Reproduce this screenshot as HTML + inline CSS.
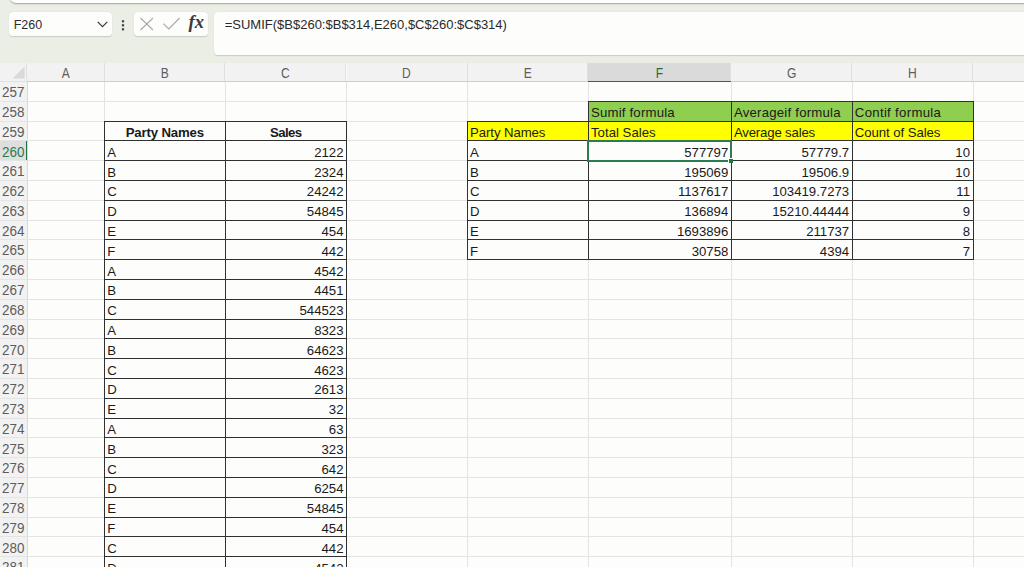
<!DOCTYPE html>
<html lang="en"><head><meta charset="utf-8"><title>Excel - SUMIF</title>
<style>
*{box-sizing:border-box;margin:0;padding:0}
html,body{width:1024px;height:567px;overflow:hidden}
body{background:#ebeee4;font-family:"Liberation Sans",sans-serif;font-size:13.2px;color:#1a1a1a;position:relative}
.abs{position:absolute}
.ribbon{left:10px;top:-10px;width:1030px;height:13.2px;background:#fdfdfc;border-radius:0 0 0 6px;box-shadow:0 1px 1.5px rgba(90,100,90,.5)}
.box{background:#fdfdfc;border-radius:4px;box-shadow:0 0.5px 1px rgba(120,125,115,.3)}
.namebox{left:8.5px;top:12px;width:103.5px;height:24px}
.namebox span{position:absolute;left:5.2px;top:6px;font-size:12.5px;color:#2e2e2e}
.btns{left:133.7px;top:12px;width:74px;height:23.5px}
.fbar{left:213.7px;top:12px;width:830px;height:43px}
.fbar span{position:absolute;left:11px;top:4.5px;font-size:13px;color:#2a2a2a;white-space:pre}
.sheet{left:0;top:62.5px;width:1024px;height:505px;background:#fdfdfc}
.chb{top:62.5px;height:19px;background:#f2f2f2;border-right:1px solid #e0e0e0}
.chb.sel{background:#dadada}
.ch{top:63px;height:20px;line-height:20px;color:#5e5e5e;text-align:center;font-size:14.5px}
.ch.sel{color:#1e6e42}
.ch span{display:inline-block;transform:scaleX(.83)}
.rhb{left:0;width:27.3px;background:#f2f2f2}
.rhb.sel{background:#dedede}
.rh{left:0;width:27.3px;height:20px;line-height:20px;color:#5c5c5c;text-align:right;padding-right:3px;font-size:14px;white-space:nowrap}
.rh span{display:inline-block;transform:scaleX(.96);transform-origin:100% 50%}
.rh.sel{color:#2a7a4d}
.gl{background:#e4e4e4}
.c{white-space:nowrap;overflow:hidden;height:20px;line-height:20px}
.l{text-align:left}
.r{text-align:right}
.b{font-weight:bold;text-align:center}
.bk{background:#303030}
</style></head><body>

<div class="abs ribbon"></div>
<div class="abs box namebox"><span>F260</span><svg class="abs" style="left:88.2px;top:9.4px" width="11" height="7" viewBox="0 0 11 7"><path d="M0.7 0.9 L5.5 5.7 L10.3 0.9" fill="none" stroke="#3a3a3a" stroke-width="1.25"/></svg></div>
<svg class="abs" style="left:120.2px;top:17.5px" width="6" height="14" viewBox="0 0 6 14"><rect x="1.9" y="2.2" width="2.2" height="2.2" fill="#444"/><rect x="1.9" y="6.2" width="2.2" height="2.2" fill="#444"/><rect x="1.9" y="10.2" width="2.2" height="2.2" fill="#444"/></svg>
<div class="abs box btns"><svg class="abs" style="left:5px;top:5px" width="16" height="14" viewBox="0 0 16 14"><path d="M1.5 1 L14 13 M14 1 L1.5 13" fill="none" stroke="#a9a9a9" stroke-width="1.1"/></svg><svg class="abs" style="left:28px;top:5px" width="19" height="14" viewBox="0 0 19 14"><path d="M1.3 6.6 L6.8 12 L17.6 1" fill="none" stroke="#a9a9a9" stroke-width="1.1"/></svg><span class="abs" style="left:54.8px;top:0.2px;font-family:'Liberation Serif',serif;font-style:italic;font-weight:bold;font-size:18.5px;color:#3a3a3a;letter-spacing:0.2px">fx</span></div>
<div class="abs box fbar"><span>=SUMIF($B$260:$B$314,E260,$C$260:$C$314)</span></div>
<div class="abs sheet"></div>
<div class="abs chb" style="left:0;width:27.3px"></div>
<svg class="abs" style="left:12px;top:66.3px" width="13" height="13" viewBox="0 0 13 13"><path d="M12.6 0.4 L12.6 12.4 L0.4 12.4 Z" fill="#dadada"/></svg>
<div class="abs chb" style="left:27.3px;width:77.3px"></div>
<div class="abs ch" style="left:27.0px;width:77.3px"><span>A</span></div>
<div class="abs chb" style="left:104.6px;width:120.8px"></div>
<div class="abs ch" style="left:104.3px;width:120.8px"><span>B</span></div>
<div class="abs chb" style="left:225.4px;width:121.1px"></div>
<div class="abs ch" style="left:225.1px;width:121.1px"><span>C</span></div>
<div class="abs chb" style="left:346.5px;width:121.0px"></div>
<div class="abs ch" style="left:346.2px;width:121.0px"><span>D</span></div>
<div class="abs chb" style="left:467.5px;width:120.9px"></div>
<div class="abs ch" style="left:467.2px;width:120.9px"><span>E</span></div>
<div class="abs chb sel" style="left:588.4px;width:142.9px"></div>
<div class="abs ch sel" style="left:588.1px;width:142.9px"><span>F</span></div>
<div class="abs chb" style="left:731.3px;width:120.9px"></div>
<div class="abs ch" style="left:731.0px;width:120.9px"><span>G</span></div>
<div class="abs chb" style="left:852.2px;width:120.8px"></div>
<div class="abs ch" style="left:851.9000000000001px;width:120.8px"><span>H</span></div>
<div class="abs chb" style="left:973.0px;width:57.0px"></div>
<div class="abs" style="left:0;top:80.9px;width:27.3px;height:1.2px;background:#e2e2e2"></div><div class="abs" style="left:27.3px;top:80.9px;width:1000px;height:1.6px;background:#cecece"></div>
<div class="abs" style="left:588.4px;top:80.8px;width:142.9px;height:1.6px;background:#217346"></div>
<div class="abs rhb" style="top:81.5px;height:19.8px"></div>
<div class="abs rh" style="top:82px"><span>257</span></div>
<div class="abs rhb" style="top:101.3px;height:19.8px"></div>
<div class="abs rh" style="top:102px"><span>258</span></div>
<div class="abs rhb" style="top:121.1px;height:19.8px"></div>
<div class="abs rh" style="top:122px"><span>259</span></div>
<div class="abs rhb sel" style="top:140.9px;height:19.8px"></div>
<div class="abs rh sel" style="top:142px"><span>260</span></div>
<div class="abs rhb" style="top:160.7px;height:19.8px"></div>
<div class="abs rh" style="top:161px"><span>261</span></div>
<div class="abs rhb" style="top:180.5px;height:19.8px"></div>
<div class="abs rh" style="top:181px"><span>262</span></div>
<div class="abs rhb" style="top:200.3px;height:19.8px"></div>
<div class="abs rh" style="top:201px"><span>263</span></div>
<div class="abs rhb" style="top:220.1px;height:19.8px"></div>
<div class="abs rh" style="top:221px"><span>264</span></div>
<div class="abs rhb" style="top:239.9px;height:19.8px"></div>
<div class="abs rh" style="top:240px"><span>265</span></div>
<div class="abs rhb" style="top:259.7px;height:19.8px"></div>
<div class="abs rh" style="top:260px"><span>266</span></div>
<div class="abs rhb" style="top:279.5px;height:19.8px"></div>
<div class="abs rh" style="top:280px"><span>267</span></div>
<div class="abs rhb" style="top:299.3px;height:19.8px"></div>
<div class="abs rh" style="top:300px"><span>268</span></div>
<div class="abs rhb" style="top:319.1px;height:19.8px"></div>
<div class="abs rh" style="top:320px"><span>269</span></div>
<div class="abs rhb" style="top:338.9px;height:19.8px"></div>
<div class="abs rh" style="top:340px"><span>270</span></div>
<div class="abs rhb" style="top:358.7px;height:19.8px"></div>
<div class="abs rh" style="top:359px"><span>271</span></div>
<div class="abs rhb" style="top:378.5px;height:19.8px"></div>
<div class="abs rh" style="top:379px"><span>272</span></div>
<div class="abs rhb" style="top:398.3px;height:19.8px"></div>
<div class="abs rh" style="top:399px"><span>273</span></div>
<div class="abs rhb" style="top:418.1px;height:19.8px"></div>
<div class="abs rh" style="top:419px"><span>274</span></div>
<div class="abs rhb" style="top:437.9px;height:19.8px"></div>
<div class="abs rh" style="top:439px"><span>275</span></div>
<div class="abs rhb" style="top:457.7px;height:19.8px"></div>
<div class="abs rh" style="top:458px"><span>276</span></div>
<div class="abs rhb" style="top:477.5px;height:19.8px"></div>
<div class="abs rh" style="top:478px"><span>277</span></div>
<div class="abs rhb" style="top:497.3px;height:19.8px"></div>
<div class="abs rh" style="top:498px"><span>278</span></div>
<div class="abs rhb" style="top:517.1px;height:19.8px"></div>
<div class="abs rh" style="top:518px"><span>279</span></div>
<div class="abs rhb" style="top:536.9px;height:19.8px"></div>
<div class="abs rh" style="top:538px"><span>280</span></div>
<div class="abs rhb" style="top:556.7px;height:19.8px"></div>
<div class="abs rh" style="top:557px"><span>281</span></div>
<div class="abs rhb" style="top:576.5px;height:19.8px"></div>
<div class="abs rh" style="top:577px"><span>282</span></div>
<div class="abs" style="left:26.5px;top:82px;width:1px;height:490px;background:#d9d9d9"></div>
<div class="abs" style="left:25.7px;top:140.9px;width:1.8px;height:19.8px;background:#1e7145"></div>
<div class="abs gl" style="left:0;top:100.8px;width:1024px;height:1px"></div>
<div class="abs gl" style="left:0;top:120.6px;width:1024px;height:1px"></div>
<div class="abs gl" style="left:0;top:140.4px;width:1024px;height:1px"></div>
<div class="abs gl" style="left:0;top:160.2px;width:1024px;height:1px"></div>
<div class="abs gl" style="left:0;top:180.0px;width:1024px;height:1px"></div>
<div class="abs gl" style="left:0;top:199.8px;width:1024px;height:1px"></div>
<div class="abs gl" style="left:0;top:219.6px;width:1024px;height:1px"></div>
<div class="abs gl" style="left:0;top:239.4px;width:1024px;height:1px"></div>
<div class="abs gl" style="left:0;top:259.2px;width:1024px;height:1px"></div>
<div class="abs gl" style="left:0;top:279.0px;width:1024px;height:1px"></div>
<div class="abs gl" style="left:0;top:298.8px;width:1024px;height:1px"></div>
<div class="abs gl" style="left:0;top:318.6px;width:1024px;height:1px"></div>
<div class="abs gl" style="left:0;top:338.4px;width:1024px;height:1px"></div>
<div class="abs gl" style="left:0;top:358.2px;width:1024px;height:1px"></div>
<div class="abs gl" style="left:0;top:378.0px;width:1024px;height:1px"></div>
<div class="abs gl" style="left:0;top:397.8px;width:1024px;height:1px"></div>
<div class="abs gl" style="left:0;top:417.6px;width:1024px;height:1px"></div>
<div class="abs gl" style="left:0;top:437.4px;width:1024px;height:1px"></div>
<div class="abs gl" style="left:0;top:457.2px;width:1024px;height:1px"></div>
<div class="abs gl" style="left:0;top:477.0px;width:1024px;height:1px"></div>
<div class="abs gl" style="left:0;top:496.8px;width:1024px;height:1px"></div>
<div class="abs gl" style="left:0;top:516.6px;width:1024px;height:1px"></div>
<div class="abs gl" style="left:0;top:536.4px;width:1024px;height:1px"></div>
<div class="abs gl" style="left:0;top:556.2px;width:1024px;height:1px"></div>
<div class="abs gl" style="left:0;top:576.0px;width:1024px;height:1px"></div>
<div class="abs gl" style="left:104.1px;top:82px;width:1px;height:490px"></div>
<div class="abs gl" style="left:224.9px;top:82px;width:1px;height:490px"></div>
<div class="abs gl" style="left:346.0px;top:82px;width:1px;height:490px"></div>
<div class="abs gl" style="left:467.0px;top:82px;width:1px;height:490px"></div>
<div class="abs gl" style="left:587.9px;top:82px;width:1px;height:490px"></div>
<div class="abs gl" style="left:730.8px;top:82px;width:1px;height:490px"></div>
<div class="abs gl" style="left:851.7px;top:82px;width:1px;height:490px"></div>
<div class="abs gl" style="left:972.5px;top:82px;width:1px;height:490px"></div>
<div class="abs" style="left:588.4px;top:101.3px;width:142.9px;height:19.8px;background:#8fce4f"></div>
<div class="abs c l" style="left:591.0px;top:103px;width:137.3px;letter-spacing:0.188px;">Sumif formula</div>
<div class="abs" style="left:731.3px;top:101.3px;width:120.9px;height:19.8px;background:#8fce4f"></div>
<div class="abs c l" style="left:733.9px;top:103px;width:115.3px;letter-spacing:0.222px;">Averageif formula</div>
<div class="abs" style="left:852.2px;top:101.3px;width:120.8px;height:19.8px;background:#8fce4f"></div>
<div class="abs c l" style="left:854.8px;top:103px;width:115.2px;letter-spacing:0.308px;">Contif formula</div>
<div class="abs" style="left:467.5px;top:121.1px;width:120.9px;height:19.8px;background:#ffff00"></div>
<div class="abs c l" style="left:470.1px;top:123px;width:115.3px;letter-spacing:-0.084px;">Party Names</div>
<div class="abs" style="left:588.4px;top:121.1px;width:142.9px;height:19.8px;background:#ffff00"></div>
<div class="abs c l" style="left:591.0px;top:123px;width:137.3px;letter-spacing:0.017px;">Total Sales</div>
<div class="abs" style="left:731.3px;top:121.1px;width:120.9px;height:19.8px;background:#ffff00"></div>
<div class="abs c l" style="left:733.9px;top:123px;width:115.3px;letter-spacing:-0.173px;">Average sales</div>
<div class="abs" style="left:852.2px;top:121.1px;width:120.8px;height:19.8px;background:#ffff00"></div>
<div class="abs c l" style="left:854.8px;top:123px;width:115.2px;letter-spacing:-0.065px;">Count of Sales</div>
<div class="abs c l" style="left:470.1px;top:143px;width:115.3px;">A</div>
<div class="abs c r" style="left:591.0px;top:143px;width:137.3px;">577797</div>
<div class="abs c r" style="left:733.9px;top:143px;width:115.3px;">57779.7</div>
<div class="abs c r" style="left:854.8px;top:143px;width:115.2px;">10</div>
<div class="abs c l" style="left:470.1px;top:163px;width:115.3px;">B</div>
<div class="abs c r" style="left:591.0px;top:163px;width:137.3px;">195069</div>
<div class="abs c r" style="left:733.9px;top:163px;width:115.3px;">19506.9</div>
<div class="abs c r" style="left:854.8px;top:163px;width:115.2px;">10</div>
<div class="abs c l" style="left:470.1px;top:182px;width:115.3px;">C</div>
<div class="abs c r" style="left:591.0px;top:182px;width:137.3px;">1137617</div>
<div class="abs c r" style="left:733.9px;top:182px;width:115.3px;">103419.7273</div>
<div class="abs c r" style="left:854.8px;top:182px;width:115.2px;">11</div>
<div class="abs c l" style="left:470.1px;top:202px;width:115.3px;">D</div>
<div class="abs c r" style="left:591.0px;top:202px;width:137.3px;">136894</div>
<div class="abs c r" style="left:733.9px;top:202px;width:115.3px;">15210.44444</div>
<div class="abs c r" style="left:854.8px;top:202px;width:115.2px;">9</div>
<div class="abs c l" style="left:470.1px;top:222px;width:115.3px;">E</div>
<div class="abs c r" style="left:591.0px;top:222px;width:137.3px;">1693896</div>
<div class="abs c r" style="left:733.9px;top:222px;width:115.3px;">211737</div>
<div class="abs c r" style="left:854.8px;top:222px;width:115.2px;">8</div>
<div class="abs c l" style="left:470.1px;top:242px;width:115.3px;">F</div>
<div class="abs c r" style="left:591.0px;top:242px;width:137.3px;">30758</div>
<div class="abs c r" style="left:733.9px;top:242px;width:115.3px;">4394</div>
<div class="abs c r" style="left:854.8px;top:242px;width:115.2px;">7</div>
<div class="abs c b" style="left:107.2px;top:123px;width:115.2px;letter-spacing:-0.146px;">Party Names</div>
<div class="abs c b" style="left:228.0px;top:123px;width:115.5px;letter-spacing:-0.634px;">Sales</div>
<div class="abs c l" style="left:107.2px;top:143px;width:115.2px;">A</div>
<div class="abs c r" style="left:228.0px;top:143px;width:115.5px;">2122</div>
<div class="abs c l" style="left:107.2px;top:163px;width:115.2px;">B</div>
<div class="abs c r" style="left:228.0px;top:163px;width:115.5px;">2324</div>
<div class="abs c l" style="left:107.2px;top:182px;width:115.2px;">C</div>
<div class="abs c r" style="left:228.0px;top:182px;width:115.5px;">24242</div>
<div class="abs c l" style="left:107.2px;top:202px;width:115.2px;">D</div>
<div class="abs c r" style="left:228.0px;top:202px;width:115.5px;">54845</div>
<div class="abs c l" style="left:107.2px;top:222px;width:115.2px;">E</div>
<div class="abs c r" style="left:228.0px;top:222px;width:115.5px;">454</div>
<div class="abs c l" style="left:107.2px;top:242px;width:115.2px;">F</div>
<div class="abs c r" style="left:228.0px;top:242px;width:115.5px;">442</div>
<div class="abs c l" style="left:107.2px;top:262px;width:115.2px;">A</div>
<div class="abs c r" style="left:228.0px;top:262px;width:115.5px;">4542</div>
<div class="abs c l" style="left:107.2px;top:281px;width:115.2px;">B</div>
<div class="abs c r" style="left:228.0px;top:281px;width:115.5px;">4451</div>
<div class="abs c l" style="left:107.2px;top:301px;width:115.2px;">C</div>
<div class="abs c r" style="left:228.0px;top:301px;width:115.5px;">544523</div>
<div class="abs c l" style="left:107.2px;top:321px;width:115.2px;">A</div>
<div class="abs c r" style="left:228.0px;top:321px;width:115.5px;">8323</div>
<div class="abs c l" style="left:107.2px;top:341px;width:115.2px;">B</div>
<div class="abs c r" style="left:228.0px;top:341px;width:115.5px;">64623</div>
<div class="abs c l" style="left:107.2px;top:361px;width:115.2px;">C</div>
<div class="abs c r" style="left:228.0px;top:361px;width:115.5px;">4623</div>
<div class="abs c l" style="left:107.2px;top:380px;width:115.2px;">D</div>
<div class="abs c r" style="left:228.0px;top:380px;width:115.5px;">2613</div>
<div class="abs c l" style="left:107.2px;top:400px;width:115.2px;">E</div>
<div class="abs c r" style="left:228.0px;top:400px;width:115.5px;">32</div>
<div class="abs c l" style="left:107.2px;top:420px;width:115.2px;">A</div>
<div class="abs c r" style="left:228.0px;top:420px;width:115.5px;">63</div>
<div class="abs c l" style="left:107.2px;top:440px;width:115.2px;">B</div>
<div class="abs c r" style="left:228.0px;top:440px;width:115.5px;">323</div>
<div class="abs c l" style="left:107.2px;top:460px;width:115.2px;">C</div>
<div class="abs c r" style="left:228.0px;top:460px;width:115.5px;">642</div>
<div class="abs c l" style="left:107.2px;top:479px;width:115.2px;">D</div>
<div class="abs c r" style="left:228.0px;top:479px;width:115.5px;">6254</div>
<div class="abs c l" style="left:107.2px;top:499px;width:115.2px;">E</div>
<div class="abs c r" style="left:228.0px;top:499px;width:115.5px;">54845</div>
<div class="abs c l" style="left:107.2px;top:519px;width:115.2px;">F</div>
<div class="abs c r" style="left:228.0px;top:519px;width:115.5px;">454</div>
<div class="abs c l" style="left:107.2px;top:539px;width:115.2px;">C</div>
<div class="abs c r" style="left:228.0px;top:539px;width:115.5px;">442</div>
<div class="abs c l" style="left:107.2px;top:559px;width:115.2px;">D</div>
<div class="abs c r" style="left:228.0px;top:559px;width:115.5px;">4542</div>
<div class="abs bk" style="left:104.1px;top:120.60px;width:242.9px;height:1px"></div>
<div class="abs bk" style="left:104.1px;top:140.40px;width:242.9px;height:1px"></div>
<div class="abs bk" style="left:104.1px;top:160.20px;width:242.9px;height:1px"></div>
<div class="abs bk" style="left:104.1px;top:180.00px;width:242.9px;height:1px"></div>
<div class="abs bk" style="left:104.1px;top:199.80px;width:242.9px;height:1px"></div>
<div class="abs bk" style="left:104.1px;top:219.60px;width:242.9px;height:1px"></div>
<div class="abs bk" style="left:104.1px;top:239.40px;width:242.9px;height:1px"></div>
<div class="abs bk" style="left:104.1px;top:259.20px;width:242.9px;height:1px"></div>
<div class="abs bk" style="left:104.1px;top:279.00px;width:242.9px;height:1px"></div>
<div class="abs bk" style="left:104.1px;top:298.80px;width:242.9px;height:1px"></div>
<div class="abs bk" style="left:104.1px;top:318.60px;width:242.9px;height:1px"></div>
<div class="abs bk" style="left:104.1px;top:338.40px;width:242.9px;height:1px"></div>
<div class="abs bk" style="left:104.1px;top:358.20px;width:242.9px;height:1px"></div>
<div class="abs bk" style="left:104.1px;top:378.00px;width:242.9px;height:1px"></div>
<div class="abs bk" style="left:104.1px;top:397.80px;width:242.9px;height:1px"></div>
<div class="abs bk" style="left:104.1px;top:417.60px;width:242.9px;height:1px"></div>
<div class="abs bk" style="left:104.1px;top:437.40px;width:242.9px;height:1px"></div>
<div class="abs bk" style="left:104.1px;top:457.20px;width:242.9px;height:1px"></div>
<div class="abs bk" style="left:104.1px;top:477.00px;width:242.9px;height:1px"></div>
<div class="abs bk" style="left:104.1px;top:496.80px;width:242.9px;height:1px"></div>
<div class="abs bk" style="left:104.1px;top:516.60px;width:242.9px;height:1px"></div>
<div class="abs bk" style="left:104.1px;top:536.40px;width:242.9px;height:1px"></div>
<div class="abs bk" style="left:104.1px;top:556.20px;width:242.9px;height:1px"></div>
<div class="abs bk" style="left:104.1px;top:576.00px;width:242.9px;height:1px"></div>
<div class="abs bk" style="left:104.10px;top:120.6px;width:1px;height:454.9px"></div>
<div class="abs bk" style="left:224.90px;top:120.6px;width:1px;height:454.9px"></div>
<div class="abs bk" style="left:346.00px;top:120.6px;width:1px;height:454.9px"></div>
<div class="abs bk" style="left:587.9px;top:100.80px;width:385.6px;height:1px"></div>
<div class="abs bk" style="left:467.0px;top:120.60px;width:506.5px;height:1px"></div>
<div class="abs bk" style="left:467.0px;top:140.40px;width:506.5px;height:1px"></div>
<div class="abs bk" style="left:467.0px;top:160.20px;width:506.5px;height:1px"></div>
<div class="abs bk" style="left:467.0px;top:180.00px;width:506.5px;height:1px"></div>
<div class="abs bk" style="left:467.0px;top:199.80px;width:506.5px;height:1px"></div>
<div class="abs bk" style="left:467.0px;top:219.60px;width:506.5px;height:1px"></div>
<div class="abs bk" style="left:467.0px;top:239.40px;width:506.5px;height:1px"></div>
<div class="abs bk" style="left:467.0px;top:259.20px;width:506.5px;height:1px"></div>
<div class="abs bk" style="left:467.00px;top:120.6px;width:1px;height:139.6px"></div>
<div class="abs bk" style="left:587.90px;top:100.8px;width:1px;height:159.4px"></div>
<div class="abs bk" style="left:730.80px;top:100.8px;width:1px;height:159.4px"></div>
<div class="abs bk" style="left:851.70px;top:100.8px;width:1px;height:159.4px"></div>
<div class="abs bk" style="left:972.50px;top:100.8px;width:1px;height:159.4px"></div>
<div class="abs" style="left:587px;top:140px;width:145px;height:22px;border:2px solid #2a7d50"></div>
<div class="abs" style="left:728px;top:158px;width:5px;height:5px;background:#fdfdfc"></div>
<div class="abs" style="left:729px;top:159px;width:4.4px;height:4.4px;background:#217346"></div>
</body></html>
